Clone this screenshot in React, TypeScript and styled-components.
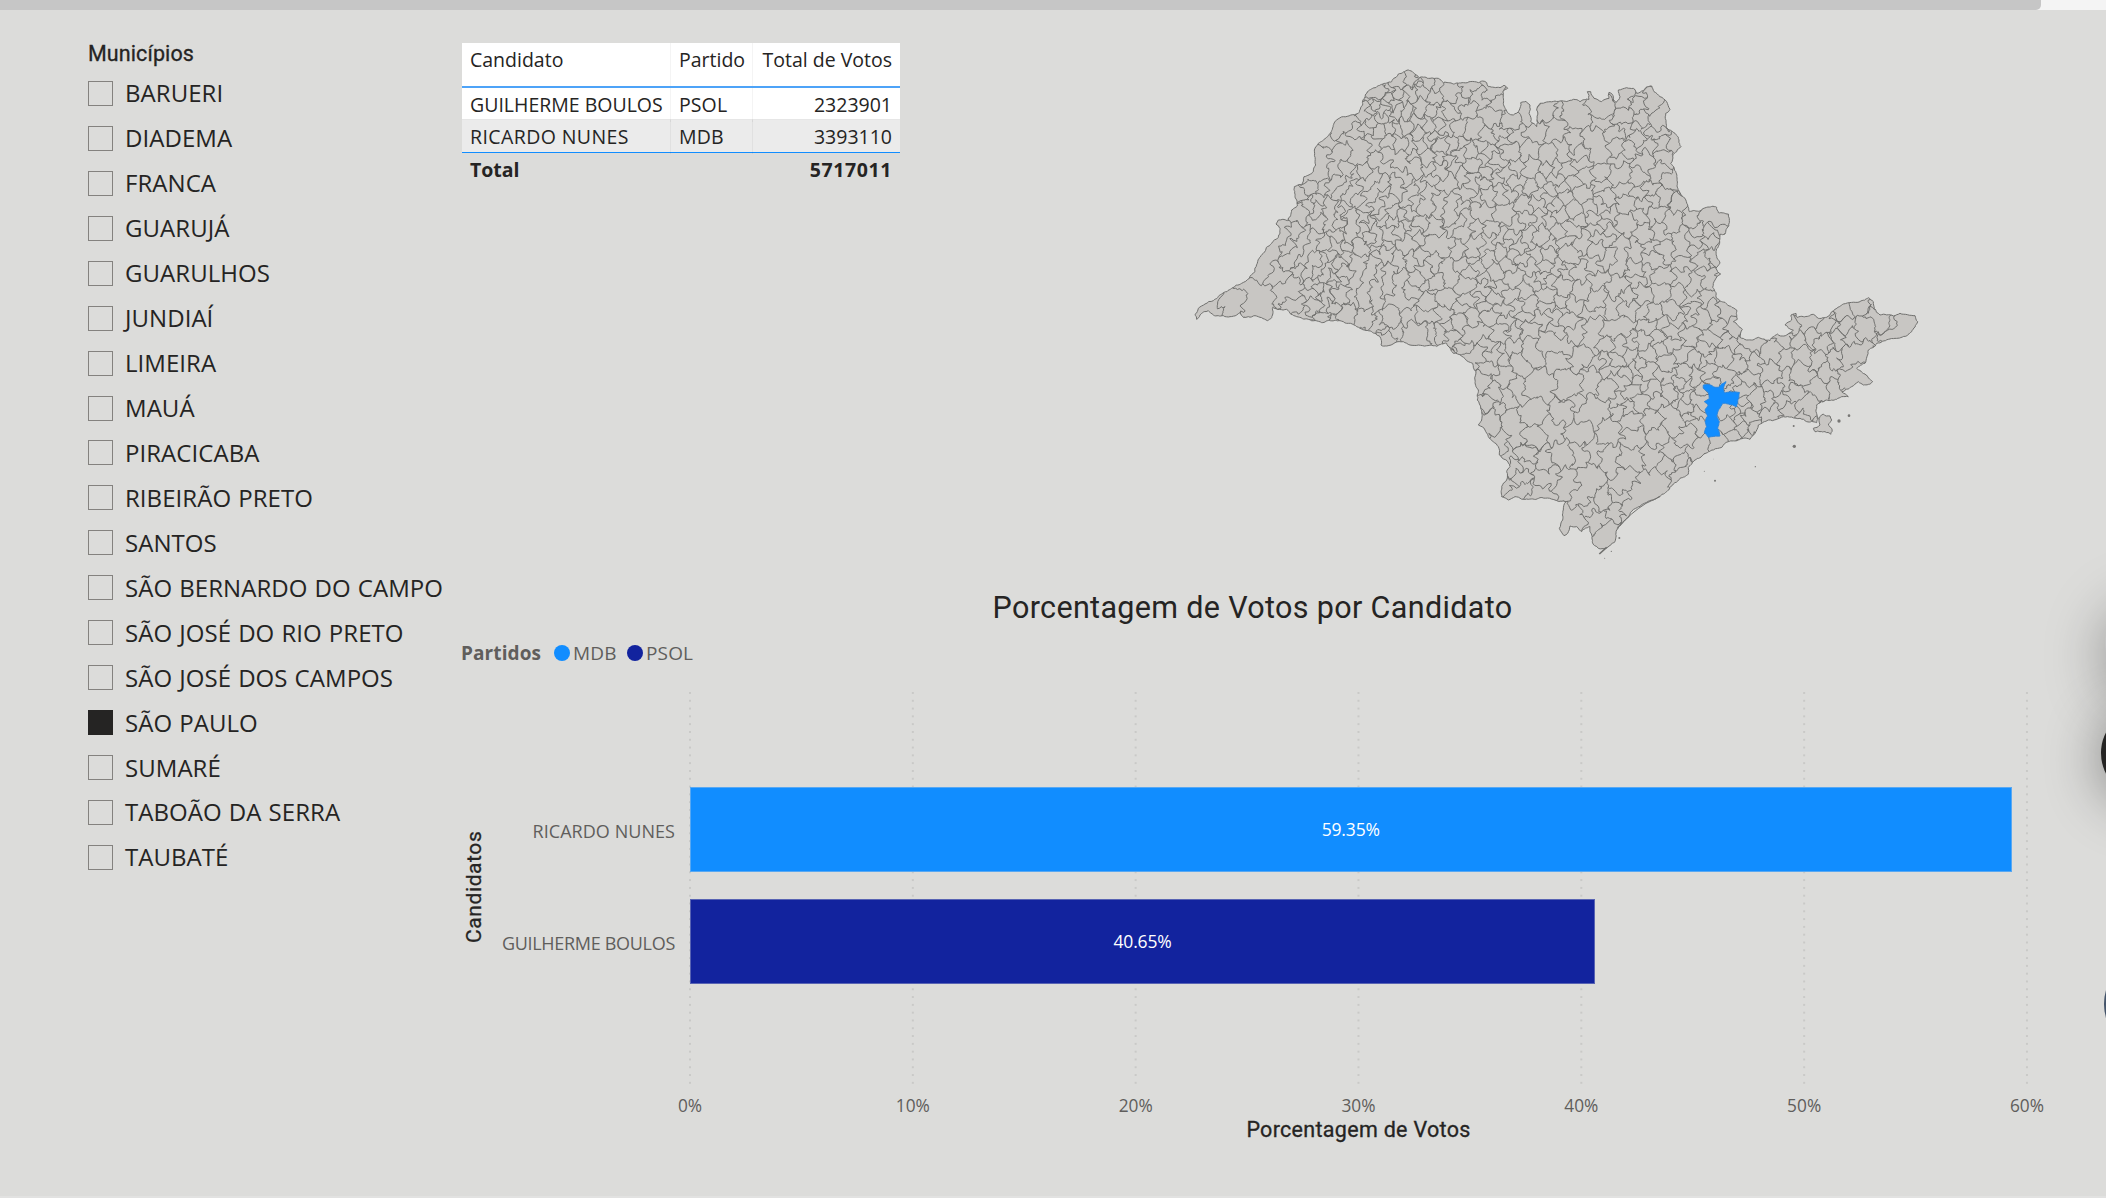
import React from "react";
import styled, { createGlobalStyle } from "styled-components";

const Global = createGlobalStyle`
  *, *::before, *::after { box-sizing: border-box; }
  html, body { margin: 0; padding: 0; background: #dcdcda; overflow: hidden; }
`;

const SANS = `"Open Sans", "Noto Sans", sans-serif`;
const DIN = `Roboto, "Liberation Sans", sans-serif`;

/* ---------- geometry of the state map ---------- */

type Pt = [number, number];
const pts = (s: string, dx = 0, dy = 0): Pt[] =>
  s.trim().split(/\s+/).map((p) => {
    const [x, y] = p.split(",").map(Number);
    return [x + dx, y + dy] as Pt;
  });

const OUTLINE: Pt[] = [
  ...pts(`45,793 55,775 75,762 100,752 125,732 155,715 185,700 208,685 225,665 237,625 250,610 275,580 295,562 300,535
  288,522 295,510 322,512 335,480 352,468 345,440 343,410 365,405 372,380 400,365 407,345 403,300 415,280 440,262 457,238
  470,210 490,200 535,190 548,165 556,135 578,115 605,103 635,95 655,72 685,60 700,68 718,83 750,85 775,85 790,98 820,102
  850,98 895,98 908,93 920,98 925,110 960,113 972,105 983,115 968,125 970,160 985,190 1000,195 1018,180 1022,158 1038,154
  1050,165 1052,215 1070,230 1070,180 1080,160 1100,156`),
  ...pts(`60,153 100,148 120,155 147,148 142,125 152,125 162,145 185,155 207,145 207,127 217,133 220,150 228,158 240,140
  235,120 260,113 280,115 290,130 310,122 318,112 335,108 342,125 360,140 380,155 390,178 377,190 378,232 405,250 415,262
  423,290 410,305 398,318 392,340 408,368 412,400 420,428 435,445 448,485 480,483 500,472 530,472 535,488 565,492 568,518
  555,552 540,553 535,590 528,605 540,640 528,655 542,672 525,690 518,712 530,745 555,757 590,780 592,808 580,815 607,838
  600,862 620,870 655,862 690,872 712,852 722,858 740,855 760,840 735,825 755,810 753,795 768,790 772,803 790,800 820,793
  835,805 868,797 885,778 910,762 960,755 985,743 1000,755 1003,775 1020,795 1060,798 1080,790 1125,797 1133,815 1115,845
  1100,858 1065,865 1045,868 1010,880 985,900 975,940`, 1080, 0),
  ...pts(`1250,115 1275,132 1298,155 1270,165 1255,155 1235,170 1205,185 1225,200 1205,200 1190,208 1160,210 1130,225
  1128,245 1135,265 1130,278 1100,275 1080,265 1030,260 985,270 955,285 945,310 930,328 910,325 895,330 865,335 820,360
  765,390 745,412 745,432 720,445 690,472 640,510 600,530 560,565 530,600 525,635 497,655 475,655 457,635 450,605 450,590
  425,605 410,590 390,588 383,610 372,617 358,595 368,570 370,540 378,515 345,510 300,503 265,508 225,500 205,510 185,500
  185,470 200,450 200,425 210,410 178,375 175,350 145,320 135,300 115,285 125,270 122,235 112,210 115,180 105,150 108,125
  98,100`, 780, 840),
  ...pts(`865,935 820,910 800,880 740,887 690,885 670,875 645,878 620,888 603,885 600,860 575,845 540,835 500,820 480,812
  425,818 385,808 350,800 320,778 278,772 275,803 262,812 245,803 225,797 205,800 190,802 180,788 170,795 150,800 130,797
  100,795 85,782 60,795 50,808`),
];

const ISLAND = pts(`1120,295 1140,285 1140,260 1150,252 1170,258 1175,270 1165,285 1175,295 1172,313 1155,305 1125,305`, 780, 840);

const CAPITAL = pts(`790,165 812,165 820,170 835,172 845,162 858,155 850,175 853,188 870,185 898,187 893,215 890,230 865,222
848,220 835,240 830,258 838,275 833,295 840,318 815,320 805,322 793,308 800,290 795,275 803,258 795,240 805,225 793,215
808,205 805,188 790,175`, 780, 840);

const ISLETS: [number, number, number][] = [
  [1841, 1128, 3], [1977, 1113, 5], [2007, 1097, 4], [1843, 1189, 5], [1726, 1250, 2], [1605, 1292, 3],
  [1573, 1264, 1.5], [1318, 1464, 3], [1294, 1504, 2], [1274, 1525, 1.5], [1600, 1227, 1],
];

/* One entry per municipality; long ones are described by several centres. */
const WEST = `100,765;170,765;230,740 195,715;250,650 270,612 295,580 312,535;290,665;310,735 345,720;340,545 318,595;
370,560 350,600 330,630;400,570 375,615 360,640;350,495;415,515;380,460;415,480;415,445;365,430;430,410;395,410;
425,320 422,370 395,385;485,310 470,365;450,265;510,210 475,240;530,240;505,270 550,290 540,322;580,280;
500,360 480,395 455,415;520,375 495,405 480,430;550,365 525,410 500,445;580,375 555,410 530,455;600,400 575,440 550,475;
640,400 655,440 640,490 600,510;620,355 580,330 670,385;660,330 620,310 710,355;610,440 590,470;625,455 600,490;
455,470 452,520;472,470 470,520;490,470 488,530;515,490 515,530 510,560;548,500 545,540;565,520 570,560;585,530 590,570;
435,585;460,585;470,555;445,620;510,580;540,585;600,590;625,550;610,620;655,535;640,515;400,630 385,670;430,630 410,670;
455,640 430,680;480,640 460,680;500,620 490,670;485,690;540,640 525,700 520,750;580,650 560,700 545,750;
605,660 595,720 585,745;630,670 620,720;660,690 640,740 680,760;365,665;350,765;400,700;395,735;395,770;370,790;420,720;
435,720 425,780;460,710 455,780;485,730 480,790;430,800;510,790;550,800;590,830;605,855;640,800;650,845;695,850;745,850;
785,850;815,830;690,800;745,795;790,790;815,860;625,870;670,635;700,630;720,620;735,660;710,690;760,640;770,690;
800,650 810,690;740,715;700,720;740,750;800,740;750,585 800,590;830,600;575,135;600,120;625,115;650,100;670,90;698,90;
735,100;768,100;815,130;870,115;940,130;690,135;655,130;630,140;555,170 545,195;572,170;592,165;608,180;620,165;640,160;
655,180;680,185;705,190;675,145;720,170;760,145;725,130;780,190;760,180;815,185;860,175;840,160;900,150;930,195;955,160;
890,235;840,235;800,230;770,225;745,225;710,225;680,230;655,235;625,230;595,240;575,215;560,240;635,205;605,205;625,280;
655,280;690,285;715,255;720,285;745,270;770,270;790,290;820,285;700,320;745,325;780,320;745,355;775,360;800,340;845,310;
835,290;875,310;905,290;880,340;910,330;825,350;850,380;800,400;750,390;925,300;950,320;985,300;960,250;1000,210;
1035,190;1020,255;1060,250;1045,300;1100,180;1110,240;980,270;925,265;940,350;925,370;950,385;985,375;1015,350;1050,360;
1010,400;910,400;880,400;860,435;900,450;925,440;960,430;990,425;1020,430;1050,410;1085,390;1080,430;1110,410;1100,360;
1110,320;1080,460;1035,465;970,490;920,480 890,480;1000,520;1030,500;1080,510;700,415 690,450;725,410 710,460;
745,420 735,470;780,450 775,500;815,460 815,500;845,470 830,520;865,490 850,540;890,540;930,540;670,500;690,490;680,525;
715,520;750,530;700,545;720,570;690,575;900,580 880,600;930,570 910,600;955,565;960,605;978,580;993,570 995,620;1015,590;
1050,570;1090,560;870,620;930,620;890,650;950,665;920,690;870,670;860,700;900,720;850,650;1000,690;980,640;1030,620;
1070,620;1050,650;1090,680;1060,700;1040,720;900,745;920,765;945,740;990,740;960,720;870,750;850,780;880,800;
905,840 870,855;930,800;970,780;1010,780;1045,760;1030,800;980,820;960,850;1000,840;1025,830;1045,840;1085,810;840,820;
860,900;890,910;920,890;940,910;965,910;1000,900;1055,900;1028,930;835,890`;

const CENTRE = `30,175;30,240;120,200;190,180;250,200;245,160;280,130;285,165;340,170;350,210;305,210;305,235;190,220;
220,250;255,235;165,270 175,315;290,265;325,285;350,250;370,290;405,285;230,295;270,300;240,330;310,340;365,370;400,390;
375,325;105,285;120,315;60,310;40,350;85,360;125,345;140,375;185,370;225,380 255,370;290,375;40,395;70,415;100,405;
130,430;190,410;250,420;200,440;260,460;305,435;310,460;340,450;330,430;370,440;405,445;420,480;75,445;20,450;45,465;
60,490;105,480;150,475;185,465;205,500;110,500;160,510;190,525;255,520;300,500;350,500;395,520;365,540;320,550;170,548 215,548;
170,562 210,562;95,535;30,510;60,550;35,575;75,580;130,575;170,600;205,620;240,590 235,640;285,600;335,595;340,630;
380,600;425,565 425,600;470,530;455,500;500,495;540,520;515,550;465,570;515,575;490,630;470,600;525,620;20,615;90,615;
15,650;75,660;125,665;155,640;45,650;280,665;325,670;365,685;430,645;430,685;460,697;500,685;525,672;10,680;30,700;
70,710;120,720;175,700;240,710;290,700;300,735;270,740;360,730;410,735;455,745;500,740;20,740;20,770;65,755;65,775;
100,760;165,750;165,785;220,775;265,775;300,770;345,790;390,775;410,800;450,795;495,810;525,790;565,790;530,830;570,840;
80,810;40,800;110,840;165,835 155,880;250,830 210,845;45,850;30,875 70,890;330,840;370,830;400,840;450,865;350,860;
310,870;270,880;240,890;195,890;560,880;510,860;490,890;400,880;430,910;370,900;330,910;380,930;300,940;270,920;230,930;
130,920;190,930;160,940;550,920;500,920;460,920;630,880;620,910;600,940;640,950;700,910;740,870;760,815;800,815;820,860;
785,880;740,920;790,920;855,825;890,790;925,780;955,770;985,765;895,840;920,830;935,850;970,830;1000,810;1035,830;
1095,825;855,880;870,880;890,870;930,920 950,900;880,920;840,930`;

const SOUTH = `145,125;130,155;185,145;160,185;205,195;140,215;235,180;155,240;150,275;225,280 230,320;280,250;300,170;
360,90;385,170;365,250;390,215;280,320;335,300;175,325;200,370;260,375;315,390;370,375;415,370;270,350;415,310;460,360;
225,410;255,405;235,440;205,475;250,485;300,490;320,440;380,460;450,440 430,500;400,560;455,530;475,570;490,510;500,610;
540,500;520,540;550,460;640,460 590,500 560,540;515,385;580,375;640,380;700,365;690,400;720,400;735,430;780,350;
470,230 440,260;510,300;570,280;640,270;580,315;690,250 710,280;650,310;740,310;760,285;450,160;495,180;540,150;540,215;
560,235;580,190;540,240;640,180;600,160;620,120;680,140;580,120;560,130;510,110;600,215;650,215;690,190;715,200;740,170;
720,160;745,200;770,210;740,235;770,250;745,255;780,180;730,135;770,150;810,135;850,135;815,150;880,160;835,340;870,325;
860,280;885,250;870,240;895,240;905,265;910,290;940,300;930,320;925,270;910,180;905,210;945,200;930,140;990,130;1000,175;
980,210;1020,215;1060,190;1040,155;1080,130;1130,175;1160,115;1180,190;1240,140;1100,235;1050,240;1000,250;1090,265`;

interface Seed { x: number; y: number; id: number }

function buildSeeds(): Seed[] {
  const out: Seed[] = [];
  let id = 0;
  const add = (src: string, dx: number, dy: number) =>
    src.split(";").forEach((cell) => {
      id += 1;
      pts(cell, dx, dy).forEach(([x, y]) => {
        if (!out.some((s) => s.id !== id && Math.hypot(s.x - x, s.y - y) < 11)) out.push({ x, y, id });
      });
    });
  add(WEST, 0, 0);
  add(CENTRE, 1080, 0);
  add(SOUTH, 780, 840);
  return out;
}

function rng(seed: number) {
  let s = (seed * 2654435761) >>> 0 || 1;
  return () => {
    s ^= s << 13; s >>>= 0;
    s ^= s >>> 17;
    s ^= s << 5; s >>>= 0;
    return s / 4294967296 - 0.5;
  };
}

/* Rough line between two points by repeated midpoint displacement. */
function rough(a: Pt, b: Pt, rand: () => number, amount: number): Pt[] {
  const len = Math.hypot(b[0] - a[0], b[1] - a[1]);
  if (len < 7) return [b];
  const k = rand() * amount * len;
  const m: Pt = [
    (a[0] + b[0]) / 2 - ((b[1] - a[1]) / len) * k,
    (a[1] + b[1]) / 2 + ((b[0] - a[0]) / len) * k,
  ];
  return [...rough(a, m, rand, amount), ...rough(m, b, rand, amount)];
}

/* Continuous displacement so that neighbouring cells bend together. */
const warp = ([x, y]: Pt): Pt => [
  x + 4.5 * Math.sin(x * 0.071 + y * 0.153) + 4 * Math.sin(y * 0.217 - x * 0.062 + 1.3),
  y + 4.5 * Math.sin(x * 0.163 - y * 0.058 + 2.1) + 4 * Math.sin(x * 0.224 + y * 0.083 + 0.4),
];

const f = (p: Pt) => `${p[0].toFixed(1)} ${p[1].toFixed(1)}`;

function ring(points: Pt[], seed: number, amount: number) {
  const rand = rng(seed);
  let d = `M${f(points[0])}`;
  points.forEach((p, i) => {
    rough(p, points[(i + 1) % points.length], rand, amount).forEach((q) => (d += `L${f(q)}`));
  });
  return d + "Z";
}

function borders(seeds: Seed[]) {
  let d = "";
  seeds.forEach((s, i) => {
    const R = 260;
    let poly: { p: Pt; n: number }[] = [
      { p: [s.x - R, s.y - R], n: -1 }, { p: [s.x + R, s.y - R], n: -1 },
      { p: [s.x + R, s.y + R], n: -1 }, { p: [s.x - R, s.y + R], n: -1 },
    ];
    const near = seeds
      .map((t, j) => ({ t, j, q: Math.hypot(t.x - s.x, t.y - s.y) }))
      .filter((o) => o.j !== i && o.q < 400)
      .sort((a, b) => a.q - b.q)
      .slice(0, 60);
    near.forEach(({ t, j }) => {
      const mx = (s.x + t.x) / 2, my = (s.y + t.y) / 2;
      const nx = t.x - s.x, ny = t.y - s.y;
      const side = (p: Pt) => (p[0] - mx) * nx + (p[1] - my) * ny;
      const next: typeof poly = [];
      poly.forEach((v, k) => {
        const w = poly[(k + 1) % poly.length];
        const a = side(v.p), b = side(w.p);
        const u = a / (a - b);
        const cut: Pt = [v.p[0] + (w.p[0] - v.p[0]) * u, v.p[1] + (w.p[1] - v.p[1]) * u];
        if (a <= 0) {
          next.push(v);
          if (b > 0) next.push({ p: cut, n: j });
        } else if (b <= 0) next.push({ p: cut, n: v.n });
      });
      poly = next;
    });
    poly.forEach((v, k) => {
      if (v.n <= i || seeds[v.n].id === s.id) return;
      const w = poly[(k + 1) % poly.length];
      d += `M${f(warp(v.p))}`;
      rough(v.p, w.p, rng(i * 997 + v.n), 0.62).forEach((q) => (d += `L${f(warp(q))}`));
    });
  });
  return d;
}

const STATE_PATH = ring(OUTLINE, 11, 0.24);
const ISLAND_PATH = ring(ISLAND, 5, 0.3);
const CAPITAL_PATH = ring(CAPITAL, 9, 0.14);
const BORDER_PATH = borders(buildSeeds());

function StateMap() {
  return (
    <MapSvg viewBox="0 0 2280 1560" aria-label="Mapa do estado de São Paulo">
      <defs>
        <clipPath id="state"><path d={STATE_PATH} /></clipPath>
      </defs>
      <g strokeLinejoin="round" strokeWidth="3" stroke="#70706e">
        <path d={STATE_PATH} fill="#c8c6c3" />
        <path d={ISLAND_PATH} fill="#c8c6c3" />
        <path d={BORDER_PATH} fill="none" clipPath="url(#state)" />
        <path d="M1318 1430 Q1350 1390 1398 1360 L1440 1340" fill="none" />
        <path d="M1258 1512 L1280 1492" fill="none" strokeWidth="5" />
        <path d={CAPITAL_PATH} fill="#118dff" stroke="#2d86dc" />
      </g>
      {ISLETS.map(([x, y, r], i) => <circle key={i} cx={x} cy={y} r={r} fill="#777674" />)}
    </MapSvg>
  );
}

/* ---------- page ---------- */

const Page = styled.div`
  position: relative;
  width: 2106px;
  height: 1198px;
  overflow: hidden;
  background: #dcdcda;
  border-bottom: 2px solid #e2e2e1;
  font-family: ${SANS};
  color: #252423;
`;
const ScrollTrack = styled.div`
  height: 10px;
  background: #f4f4f4;
`;
const ScrollThumb = styled.div`
  width: 2041px;
  height: 10px;
  background: #c6c6c6;
  border-radius: 0 0 5px 0;
`;
const Board = styled.main`
  display: grid;
  grid-template-columns: 373px minmax(0, 1fr);
  padding: 33px 70px 0 88px;
`;

const Slicer = styled.aside`
  display: flex;
  flex-direction: column;
`;
const SlicerTitle = styled.h2`
  margin: 0;
  height: 28px;
  font: 400 21.5px/21px ${DIN};
  -webkit-text-stroke: 0.3px #252423;
  letter-spacing: 0.1px;
`;
const SlicerRow = styled.div`
  display: flex;
  align-items: center;
  gap: 12px;
  height: 44.95px;
`;
const Box = styled.span<{ $on?: boolean }>`
  width: 25px;
  height: 25px;
  flex: none;
  border: 1.5px solid ${(p) => (p.$on ? "#252423" : "#84827f")};
  background: ${(p) => (p.$on ? "#252423" : "transparent")};
`;
const SlicerLabel = styled.span`
  font-size: 24px;
  line-height: 32px;
  letter-spacing: 0.05px;
  word-spacing: 0.8px;
  white-space: nowrap;
`;

const Content = styled.section`
  display: flex;
  flex-direction: column;
`;
const TopRow = styled.div`
  display: flex;
  justify-content: space-between;
  height: 537px;
`;
const MapSvg = styled.svg`
  width: 760px;
  height: 520px;
  margin: 7px 96px 0 0;
`;

const VotesTable = styled.div`
  width: 438px;
  height: max-content;
  margin-left: 1px;
  font-size: 19.5px;
`;
const TableRow = styled.div<{ $h: number; $bg?: string; $line?: string; $bold?: boolean }>`
  display: grid;
  grid-template-columns: 209px 82px 147px;
  height: ${(p) => p.$h}px;
  line-height: 34px;
  background: ${(p) => p.$bg ?? "transparent"};
  border-bottom: ${(p) => (p.$line ? p.$line : "0")};
  font-weight: ${(p) => (p.$bold ? 700 : 400)};
`;
const Cell = styled.span<{ $right?: boolean; $sep?: boolean; $ls?: number }>`
  padding: 0 8px;
  white-space: nowrap;
  text-align: ${(p) => (p.$right ? "right" : "left")};
  letter-spacing: ${(p) => p.$ls ?? 0}px;
  border-right: ${(p) => (p.$sep ? "1px solid rgba(0,0,0,0.045)" : "0")};
`;

const ChartTitle = styled.h1`
  margin: 0 0 0 -7px;
  width: 1597px;
  text-align: center;
  font: 400 30.5px/56px ${DIN};
  letter-spacing: 0.34px;
`;
const Legend = styled.div`
  display: flex;
  align-items: center;
  height: 34px;
  font-size: 19px;
  color: #605e5c;
`;
const LegendTitle = styled.b`
  width: 93px;
  letter-spacing: 0.1px;
`;
const LegendItem = styled.span<{ $w: number }>`
  display: flex;
  align-items: center;
  gap: 3px;
  width: ${(p) => p.$w}px;
  letter-spacing: 0.15px;
`;
const Dot = styled.i<{ $c: string }>`
  width: 16px;
  height: 16px;
  border-radius: 50%;
  background: ${(p) => p.$c};
`;

const Chart = styled.div`
  display: grid;
  grid-template-columns: 25px 189px 15px 1337px;
  margin-top: 22px;
`;
const YTitle = styled.div`
  display: flex;
  align-items: center;
  justify-content: center;
  writing-mode: vertical-rl;
  transform: rotate(180deg);
  height: 390px;
  font: 400 21px/24px ${DIN};
  -webkit-text-stroke: 0.3px #252423;
  letter-spacing: 0.6px;
`;
const Names = styled.div`
  display: flex;
  flex-direction: column;
  gap: 27px;
  padding-top: 96px;
  font-size: 18px;
  color: #605e5c;
`;
const Name = styled.span<{ $ls: number }>`
  height: 85px;
  line-height: 86px;
  text-align: right;
  white-space: nowrap;
  letter-spacing: ${(p) => p.$ls}px;
`;
const Plot = styled.div`
  display: flex;
  flex-direction: column;
  gap: 27px;
  height: 397px;
  padding-top: 95px;
  grid-column: 4;
  margin: 0 -2px 0 -1px;
  background-image: radial-gradient(circle at 1px 1px, #c9c9c7 1px, transparent 1.3px);
  background-size: 222.83px 7.8px;
`;
const Bar = styled.div<{ $c: string }>`
  height: 85px;
  margin-left: 1px;
  display: flex;
  align-items: center;
  justify-content: center;
  padding-bottom: 1px;
  background: ${(p) => p.$c};
  box-shadow: inset 0 0 0 1px rgba(220, 220, 218, 0.35);
  color: #fff;
  font-size: 17.5px;
  letter-spacing: -0.15px;
`;
const Ticks = styled.div`
  display: flex;
  justify-content: space-between;
  margin: 0 -23px 0 197px;
  font-size: 17.3px;
  line-height: 34px;
  height: 32px;
  color: #605e5c;
`;
const Tick = styled.span`
  width: 64px;
  text-align: center;
`;
const XTitle = styled.div`
  margin-left: 229px;
  width: 1337px;
  text-align: center;
  font: 400 21.5px/18px ${DIN};
  -webkit-text-stroke: 0.3px #252423;
  letter-spacing: 0.3px;
`;

/* Floating buttons that peek in from the right edge of the window. */
const Floating = styled.div<{ $x: number; $y: number; $d: number; $bg: string; $shadow: string }>`
  position: absolute;
  left: ${(p) => p.$x}px;
  top: ${(p) => p.$y}px;
  width: ${(p) => p.$d}px;
  height: ${(p) => p.$d}px;
  border-radius: 50%;
  background: ${(p) => p.$bg};
  box-shadow: ${(p) => p.$shadow};
`;

const CITIES = [
  "BARUERI", "DIADEMA", "FRANCA", "GUARUJÁ", "GUARULHOS", "JUNDIAÍ", "LIMEIRA", "MAUÁ", "PIRACICABA",
  "RIBEIRÃO PRETO", "SANTOS", "SÃO BERNARDO DO CAMPO", "SÃO JOSÉ DO RIO PRETO", "SÃO JOSÉ DOS CAMPOS",
  "SÃO PAULO", "SUMARÉ", "TABOÃO DA SERRA", "TAUBATÉ",
];
const RESULTS = [
  { name: "RICARDO NUNES", share: 59.35, color: "#118dff", spacing: 0.05 },
  { name: "GUILHERME BOULOS", share: 40.65, color: "#12239e", spacing: -0.3 },
];

export default function App() {
  return (
    <Page>
      <Global />
      <ScrollTrack><ScrollThumb /></ScrollTrack>
      <Board>
        <Slicer>
          <SlicerTitle>Municípios</SlicerTitle>
          {CITIES.map((c) => (
            <SlicerRow key={c}>
              <Box $on={c === "SÃO PAULO"} />
              <SlicerLabel>{c}</SlicerLabel>
            </SlicerRow>
          ))}
        </Slicer>
        <Content>
          <TopRow>
            <VotesTable>
              <TableRow $h={45} $bg="#fff" $line="2px solid #4da3f8">
                <Cell $sep>Candidato</Cell><Cell $sep>Partido</Cell><Cell $right>Total de Votos</Cell>
              </TableRow>
              <TableRow $h={32} $bg="#fff" $line="1px solid #e6e6e6">
                <Cell $sep>GUILHERME BOULOS</Cell><Cell $sep $ls={0.1}>PSOL</Cell><Cell $right>2323901</Cell>
              </TableRow>
              <TableRow $h={33} $bg="#ebebeb" $line="1px solid #118dff">
                <Cell $sep $ls={0.4}>RICARDO NUNES</Cell><Cell $sep $ls={0.1}>MDB</Cell><Cell $right>3393110</Cell>
              </TableRow>
              <TableRow $h={33} $bold>
                <Cell>Total</Cell><Cell /><Cell $right $ls={0.6}>5717011</Cell>
              </TableRow>
            </VotesTable>
            <StateMap />
          </TopRow>
          <ChartTitle>Porcentagem de Votos por Candidato</ChartTitle>
          <Legend>
            <LegendTitle>Partidos</LegendTitle>
            <LegendItem $w={73}><Dot $c="#118dff" />MDB</LegendItem>
            <LegendItem $w={80}><Dot $c="#12239e" />PSOL</LegendItem>
          </Legend>
          <Chart>
            <YTitle>Candidatos</YTitle>
            <Names>{RESULTS.map((r) => <Name key={r.name} $ls={r.spacing}>{r.name}</Name>)}</Names>
            <Plot>
              {RESULTS.map((r) => (
                <Bar key={r.name} $c={r.color} style={{ width: `${(r.share / 60) * 1336}px` }}>
                  {r.share.toFixed(2)}%
                </Bar>
              ))}
            </Plot>
          </Chart>
          <Ticks>{[0, 10, 20, 30, 40, 50, 60].map((t) => <Tick key={t}>{t}%</Tick>)}</Ticks>
          <XTitle>Porcentagem de Votos</XTitle>
        </Content>
      </Board>
      <Floating $x={2105} $y={592} $d={100} $bg="#c4c4c4" $shadow="0 14px 60px rgba(0,0,0,0.36)" />
      <Floating $x={2101} $y={708} $d={90} $bg="#252423" $shadow="0 6px 56px rgba(0,0,0,0.42)" />
      <Floating $x={2104} $y={954} $d={100} $bg="#44546a" $shadow="none" />
    </Page>
  );
}
